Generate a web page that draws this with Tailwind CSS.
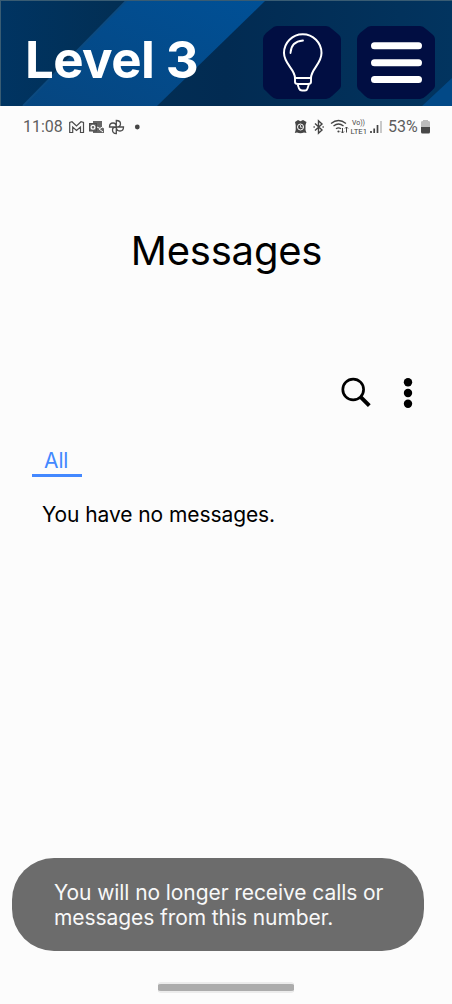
<!DOCTYPE html>
<html lang="en">
<head>
<meta charset="utf-8">
<title>Messages</title>
<script src="https://cdn.jsdelivr.net/npm/@tailwindcss/browser@4"></script>
</head>
<body class="w-[452px] h-[1004px] overflow-hidden bg-[#fcfcfc] font-['Inter',sans-serif] text-black flex flex-col">
<header class="relative h-[106px] shrink-0 overflow-hidden">
  <svg class="absolute inset-0" width="452" height="106" viewBox="0 0 452 106">
    <defs>
      <linearGradient id="base" x1="0" y1="0" x2="1" y2="0"><stop offset="0" stop-color="#003462"/><stop offset=".25" stop-color="#022f55"/><stop offset=".5" stop-color="#022b52"/><stop offset="1" stop-color="#02345f"/></linearGradient>
      <linearGradient id="band" x1="0" y1="1" x2="1" y2="0"><stop offset="0" stop-color="#064680"/><stop offset="1" stop-color="#005096"/></linearGradient>
    </defs>
    <rect width="452" height="106" fill="url(#base)"/>
    <path d="M127 0H266L157 106H23Z" fill="url(#band)"/>
    <path d="M127 0L23 106" stroke="#0c4a80" stroke-width="2"/>
    <path d="M452 78V106H422Z" fill="#024987"/>
    <path d="M0 .5H452M.5 0V106" stroke="#395c73" fill="none"/>
  </svg>
  <div class="relative flex items-start pl-[25px]">
    <h1 class="w-[238px] mt-[29px] text-[51px] leading-[62px] tracking-[-0.6px] font-bold text-white whitespace-nowrap">Level 3</h1>
    <svg class="mt-[26px]" width="79" height="73" viewBox="0 0 79 73" fill="none" stroke="#fff" stroke-linecap="round">
      <path d="M14 0H63Q66 0 69 3L75 8Q78 10 78 14V60Q78 62 75 64.500L69 70Q66 73 63 73H14Q11 73 8 70L3 65Q0 63 0 60V13Q0 10 3 7L8 3Q11 0 14 0Z" fill="#010e42" stroke="none"/>
      <path d="M32 52C32 43 21 38 21 27A18.700 18.700 0 0 1 58.500 27C58.500 38 48 43 48 52Z" stroke-width="2"/>
      <path d="M27.500 27Q28 15.500 40 14.500" stroke-width="1.800"/>
      <path d="M32 52V56Q32 58 35 58H45Q48 58 48 56V52M34.500 58L36 62.500Q37 64.500 39 64.500H42Q44 64.500 44.500 62.500L46 58" stroke-width="1.900"/>
    </svg>
    <svg class="ml-[15px] mt-[26px]" width="79" height="73" viewBox="0 0 79 73">
      <path d="M14 0H63Q66 0 69 3L75 8Q78 10 78 14V60Q78 62 75 64.500L69 70Q66 73 63 73H14Q11 73 8 70L3 65Q0 63 0 60V13Q0 10 3 7L8 3Q11 0 14 0Z" fill="#010e42"/>
      <path d="M17.500 19.700H61.500M17.500 36.700H61.500M17.500 53.400H61.500" stroke="#fff" stroke-width="7" stroke-linecap="round"/>
    </svg>
  </div>
</header>
<main class="flex flex-col">
  <div class="h-[42px] flex items-center pl-[23px] text-[#5e5e5e] font-['Roboto',sans-serif]">
    <span class="w-[46px] text-[16px] leading-5">11:08</span>
    <svg width="74" height="20" viewBox="69 117 74 20" fill="none" stroke="#4c4c4c">
      <path d="M69.700 132.500V122.500L72 121.700L76.500 126L81 121.700L83.500 122.500V132.500H80.500V127L76.500 130.500L72.700 127V132.500Z" stroke-width="1.200"/>
      <path d="M93 121H102V127L104 128.500V133H93Z" fill="#666" stroke="none"/>
      <rect x="89.500" y="123.500" width="7" height="7.500" fill="#666"/>
      <circle cx="93" cy="127.300" r="1.900" stroke="#fff" stroke-width="1.200"/>
      <path d="M97 127L100 128.500L104 126M99 129L103 132" stroke="#fff"/>
      <path d="M116.300 127V120.500Q120.500 120.500 120.500 124Q120.500 127 116.300 127H123.500Q123.500 131 120 131Q116.300 131 116.300 127V133.500Q112.500 133.500 112.500 130Q112.500 127 116.300 127H109.500Q109.500 123 113 123Q116.300 123 116.300 127Z" stroke-width="1.300"/>
      <circle cx="137.300" cy="127" r="2.400" fill="#444" stroke="none"/>
    </svg>
    <svg class="ml-[151px]" width="90" height="20" viewBox="294 117 90 20" fill="none" stroke="#444">
      <path d="M295 122L298 120L300.500 121.300L303 120L306.500 122L305.500 125V130L306.500 133L304 132.500Q300.500 134 297 132.500L294.800 133L295.700 130V125Z" fill="#454545" stroke="none"/>
      <circle cx="300.500" cy="127" r="3" stroke="#fff"/><path d="M300.500 125V127.300H302.500" stroke="#fff" stroke-width=".8"/>
      <path d="M315 123.500L322 130L318.500 133.200V120.800L322 124L315 130.500" stroke-width="1.400"/><path d="M313.500 127H314.800M322.500 127H323.800" stroke-width="1.600"/>
      <path d="M331 123.500Q338.500 117.500 346 123.500M333.500 126Q338.500 122 343.500 126M336 128.800Q338.500 126.800 341 128.800" stroke-width="1.300"/>
      <circle cx="338.500" cy="131.500" r="1.100" fill="#444" stroke="none"/>
      <path d="M342.500 128V133M341 131.500L342.500 133L344 131.500M346.500 132.500V127M345 128.500L346.500 127L348 128.500" stroke-width="1"/>
      <g fill="#444" stroke="none" font-family="Roboto" font-size="7"><text x="352" y="125.300" textLength="13" lengthAdjust="spacingAndGlyphs">Vo))</text><text x="350.500" y="133.500" textLength="16.500" lengthAdjust="spacingAndGlyphs">LTE1</text></g>
      <path d="M371 131V133M374.200 128.500V133M377.500 125V133" stroke-width="1.700"/><path d="M381 121V133" stroke="#b8b8b8" stroke-width="1.500"/>
    </svg>
    <span class="ml-[4px] w-[32px] text-[16px] leading-5">53%</span>
    <svg class="ml-px" width="9" height="14" viewBox="0 0 9 14"><path d="M0 2Q0 1 2 1V0H7V1Q9 1 9 2V8H0Z" fill="#bcbcbc"/><path d="M0 7H9V12Q9 13.500 7.500 13.500H1.500Q0 13.500 0 12Z" fill="#484848"/></svg>
  </div>
  <h2 class="mt-[78px] pl-px text-center text-[40px] leading-[50px] tracking-[-0.2px] whitespace-nowrap">Messages</h2>
  <div class="mt-[100px] h-[34px] flex pl-[340px]">
    <svg width="80" height="34" viewBox="340 376 80 34" fill="none" stroke="#000">
      <circle cx="353.200" cy="389.500" r="10.400" stroke-width="2.700"/><path d="M360.800 397.200L369.300 405.700" stroke-width="4"/>
      <g fill="#000" stroke="none"><circle cx="408" cy="382.200" r="4.200"/><circle cx="408" cy="393" r="4.200"/><circle cx="408" cy="403.700" r="4.200"/></g>
    </svg>
  </div>
  <div class="mt-[37px] ml-[32px] w-[50px] h-[30px] border-b-[3px] border-[#4388ff] pl-[12px] text-[21px] leading-[28px] tracking-[-0.1px] text-[#4388ff]">All</div>
  <p class="mt-[24px] ml-[42px] text-[21px] leading-[28px] tracking-[-0.08px] whitespace-nowrap">You have no messages.</p>
</main>
<div class="mt-auto ml-[12px] w-[412px] h-[93px] shrink-0 rounded-[42px] bg-[#6c6c6c] pl-[42px] pt-[22px] text-[21px] leading-[25px] tracking-[-0.08px] text-[#f8f8f8] whitespace-nowrap">You will no longer receive calls or<br>messages from this number.</div>
<div class="mt-[31px] mb-[11px] ml-[158px] w-[136px] h-[11px] shrink-0 rounded-[3px] border-y-2 border-[#ececec] bg-[#acacac]"></div>
</body>
</html>
